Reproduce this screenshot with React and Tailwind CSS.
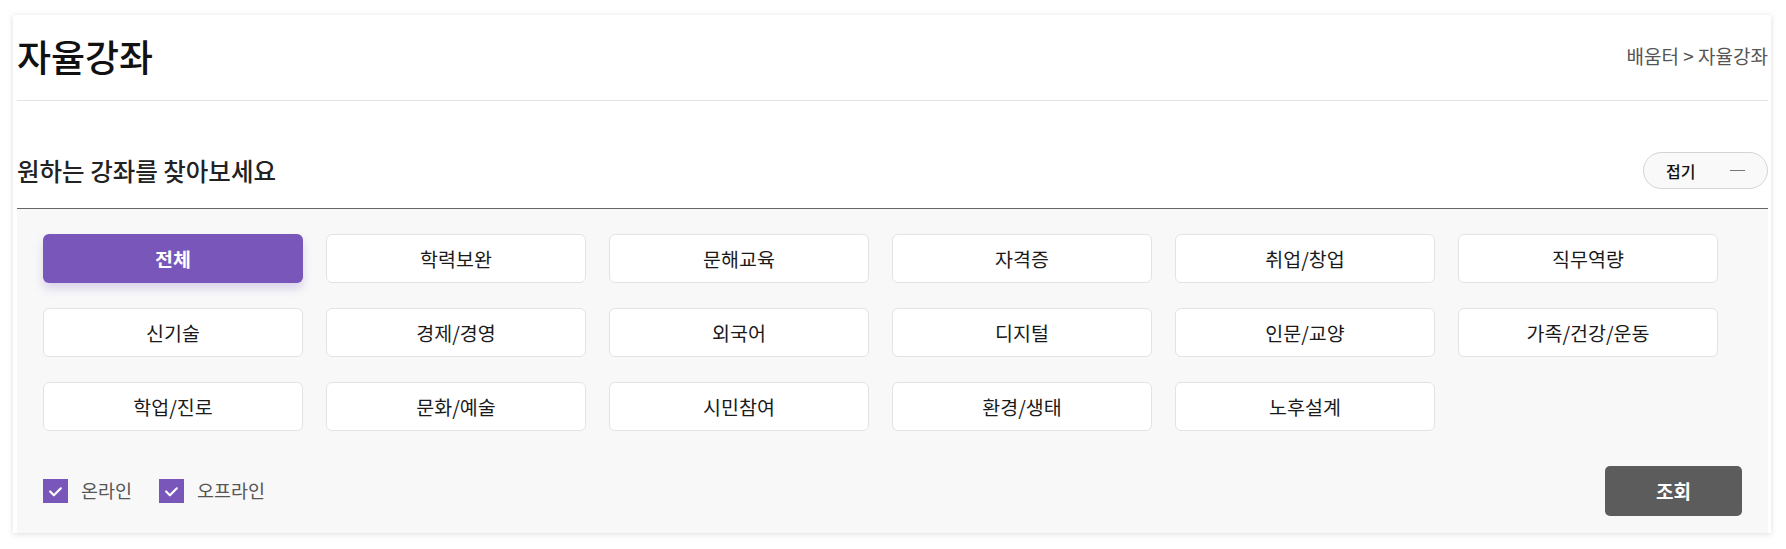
import { useState } from "react";

const categories = [
  "전체",
  "학력보완",
  "문해교육",
  "자격증",
  "취업/창업",
  "직무역량",
  "신기술",
  "경제/경영",
  "외국어",
  "디지털",
  "인문/교양",
  "가족/건강/운동",
  "학업/진로",
  "문화/예술",
  "시민참여",
  "환경/생태",
  "노후설계",
];

function CheckBox({ checked, onChange, label }) {
  return (
    <label className="flex items-center cursor-pointer" onClick={onChange}>
      <span className="flex h-[24px] w-[25px] items-center justify-center bg-[#7856ba]">
        {checked && (
          <svg width="15" height="15" viewBox="0 0 14 14" fill="none">
            <polyline
              points="2,7 5.5,10.5 12,4"
              stroke="white"
              strokeWidth="2"
              strokeLinecap="round"
              strokeLinejoin="round"
            />
          </svg>
        )}
      </span>
      <span className="ml-[13px] text-[18.5px] text-[#555]">{label}</span>
    </label>
  );
}

export default function App() {
  const [active, setActive] = useState("전체");
  const [online, setOnline] = useState(true);
  const [offline, setOffline] = useState(true);

  return (
    <div
      className="min-h-[549px] bg-white pt-[15px] pl-[13px]"
      style={{ fontFamily: '"Noto Sans CJK KR", "Noto Sans", sans-serif' }}
    >
      <div className="w-[1758px] bg-white pl-[4px] pr-[3px] shadow-[0_1px_6px_rgba(0,0,0,0.14)]">
        {/* header */}
        <div className="flex h-[86px] items-center justify-between border-b border-[#e3e3e3] pb-[2px]">
          <h1 className="text-[37px] font-medium leading-none text-[#111]">자율강좌</h1>
          <p className="text-[19px] text-[#555]">배움터 &gt; 자율강좌</p>
        </div>

        {/* section title */}
        <div className="flex items-center justify-between border-b border-[#666] pt-[51px] pb-[19px]">
          <h2 className="text-[24.5px] leading-[36px] font-medium text-[#222]">원하는 강좌를 찾아보세요</h2>
          <button className="flex h-[37px] w-[125px] items-center justify-between rounded-full border border-[#d4d4d4] bg-[#f9f9f9] pl-[22px] pr-[22px]">
            <span className="text-[16px] font-medium text-[#111]">접기</span>
            <span className="block h-[1.5px] w-[15px] bg-[#777]" />
          </button>
        </div>

        {/* filter area */}
        <div className="bg-[#f8f8f8] pt-[25px] pb-[17px] pl-[26px] pr-[26px]">
          <div className="grid w-[1675px] grid-cols-6 gap-x-[23px] gap-y-[25px]">
            {categories.map((c) => {
              const on = c === active;
              return (
                <button
                  key={c}
                  onClick={() => setActive(c)}
                  className={
                    on
                      ? "h-[49px] rounded-[6px] bg-[#7856ba] text-[19.5px] font-bold text-white shadow-[0_6px_10px_rgba(120,86,186,0.22)]"
                      : "h-[49px] rounded-[6px] border border-[#e3e3e3] bg-white text-[19.5px] text-[#1a1a1a]"
                  }
                >
                  {c}
                </button>
              );
            })}
          </div>

          <div className="mt-[35px] flex items-center justify-between">
            <div className="flex items-center gap-[27px]">
              <CheckBox checked={online} onChange={() => setOnline(!online)} label="온라인" />
              <CheckBox checked={offline} onChange={() => setOffline(!offline)} label="오프라인" />
            </div>
            <button className="h-[50px] w-[137px] rounded-[5px] bg-[#5c5c5c] text-[19px] font-bold text-white">
              조회
            </button>
          </div>
        </div>
      </div>
    </div>
  );
}
